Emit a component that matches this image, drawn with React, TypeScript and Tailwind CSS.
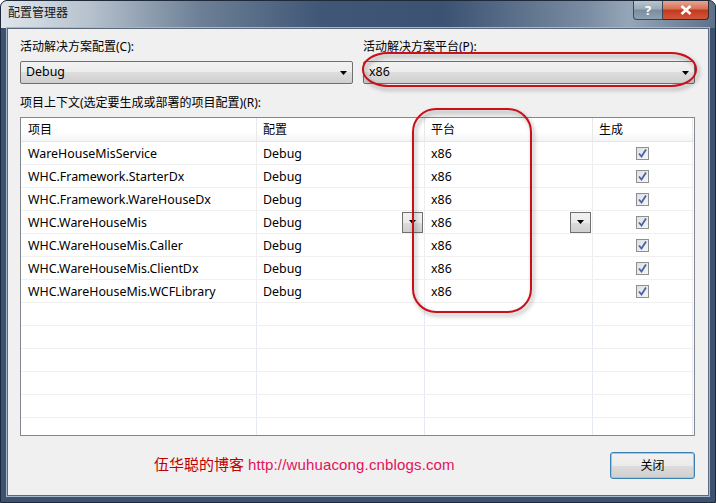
import React from 'react';

const ui = { fontFamily: '"Noto Sans", "Noto Sans CJK SC", sans-serif' };

const projects = [
  'WareHouseMisService',
  'WHC.Framework.StarterDx',
  'WHC.Framework.WareHouseDx',
  'WHC.WareHouseMis',
  'WHC.WareHouseMis.Caller',
  'WHC.WareHouseMis.ClientDx',
  'WHC.WareHouseMis.WCFLibrary',
];

function Arrow() {
  return (
    <svg width="7" height="4" viewBox="0 0 7 4">
      <path d="M0 0H7L3.5 4Z" fill="#000" />
    </svg>
  );
}

function Combo({ value, w }: { value: string; w: string }) {
  return (
    <div
      className={`${w} h-[23px] flex items-center justify-between pl-[5px] pr-[5px] rounded-[2px] border border-[#707070] bg-[linear-gradient(#f2f2f2_0%,#ebebeb_50%,#dddddd_50%,#cfcfcf_100%)] text-[12.4px] text-black`}
    >
      <span>{value}</span>
      <Arrow />
    </div>
  );
}

function CellDrop() {
  return (
    <div className="w-[21px] h-[21px] mr-[1px] flex items-center justify-center border border-[#707070] bg-[linear-gradient(#f2f2f2_0%,#ebebeb_50%,#dddddd_50%,#cfcfcf_100%)]">
      <Arrow />
    </div>
  );
}

function Check() {
  return (
    <div className="w-[13px] h-[13px] border border-[#8e8f8f] bg-[linear-gradient(135deg,#dcdfe6,#f6f6f6)] flex items-center justify-center">
      <svg width="9" height="9" viewBox="0 0 9 9">
        <path d="M1 4.5L3.5 7.5L8 0.5" fill="none" stroke="#4a62a4" strokeWidth="1.8" />
      </svg>
    </div>
  );
}

export default function App() {
  return (
    <div className="w-[716px] h-[503px] bg-white" style={ui}>
      <div className="relative w-[716px] h-[503px] rounded-t-[7px] bg-[#3d5171] border border-[#1e2a3a] overflow-hidden">
        {/* title bar */}
        <div className="h-[27px] flex items-start justify-between bg-[linear-gradient(90deg,#dfe5eb_0%,#b8c3ce_12%,#6c7f95_28%,#3f5676_45%,#3b5272_62%,#7a8ca2_82%,#95a6b8_88%,#5d7189_100%)]">
          <div className="pl-[7px] pt-[4px] text-[12px] leading-[16px] text-[#141414]">配置管理器</div>
          <div className="flex mr-[6px]">
            <div className="w-[30px] h-[19px] rounded-bl-[4px] border border-t-0 border-[#3a4a5e] bg-[linear-gradient(#b9c4cf_0%,#9aa9b8_45%,#7b8c9d_50%,#8fa0b0_100%)] flex items-center justify-center text-white text-[13px] font-bold leading-none">
              ?
            </div>
            <div className="w-[46px] h-[19px] rounded-br-[4px] border border-l-0 border-t-0 border-[#3a2a2a] bg-[linear-gradient(#e8a493_0%,#d47156_45%,#c2391c_50%,#d3563a_100%)] flex items-center justify-center">
              <svg width="12" height="10" viewBox="0 0 12 10">
                <path d="M1.5 1L10.5 9M10.5 1L1.5 9" stroke="#fff" strokeWidth="2.6" />
              </svg>
            </div>
          </div>
        </div>

        {/* client area */}
        <div className="ml-[6px] w-[702px] h-[468px] bg-[#f0f0f0] border border-[#5a697c] shadow-[0_0_0_1px_#a7b6c8] pl-[12px] pr-[12px] pt-[10px] text-[12px] text-black">
          <div className="flex gap-[10px]">
            <div>
              <div className="leading-[16px]">活动解决方案配置(C):</div>
              <div className="mt-[6px]">
                <Combo value="Debug" w="w-[333px]" />
              </div>
            </div>
            <div>
              <div className="leading-[16px]">活动解决方案平台(P):</div>
              <div className="mt-[6px]">
                <Combo value="x86" w="w-[332px]" />
              </div>
            </div>
          </div>

          <div className="mt-[11px] leading-[16px]">项目上下文(选定要生成或部署的项目配置)(R):</div>

          <div className="mt-[6px] w-[675px] h-[319px] border border-[#828790] bg-white overflow-hidden">
            <div className="flex h-[24px] border-b border-[#e5e5e5] bg-[linear-gradient(#ffffff_0%,#ffffff_60%,#f3f4f6_100%)]">
              <div className="w-[236px] pl-[7px] flex items-center border-r border-[#e8e8e8]">项目</div>
              <div className="w-[168px] pl-[6px] flex items-center border-r border-[#e8e8e8]">配置</div>
              <div className="w-[168px] pl-[6px] flex items-center border-r border-[#e8e8e8]">平台</div>
              <div className="w-[100px] pl-[6px] flex items-center border-r border-[#e8e8e8]">生成</div>
            </div>
            {projects.map((p, i) => (
              <div key={p} className="flex h-[23px] border-b border-[#f0f0f0] text-[12.4px]">
                <div className="w-[236px] pl-[7px] pt-[2px] flex items-center border-r border-[#eeeeee]">{p}</div>
                <div className="w-[168px] pl-[6px] flex items-center justify-between border-r border-[#eeeeee]">
                  <span className="pt-[2px]">Debug</span>
                  {i === 3 && <CellDrop />}
                </div>
                <div className="w-[168px] pl-[6px] flex items-center justify-between border-r border-[#eeeeee]">
                  <span className="pt-[2px]">x86</span>
                  {i === 3 && <CellDrop />}
                </div>
                <div className="w-[100px] flex items-center justify-center border-r border-[#eeeeee]">
                  <Check />
                </div>
              </div>
            ))}
            {Array.from({ length: 6 }).map((_, i) => (
              <div key={i} className="flex h-[23px] border-b border-[#f0f0f0]">
                <div className="w-[236px] border-r border-[#e4e9f4]" />
                <div className="w-[168px] border-r border-[#e4e9f4]" />
                <div className="w-[168px] border-r border-[#e4e9f4]" />
                <div className="w-[100px] border-r border-[#e4e9f4]" />
              </div>
            ))}
          </div>

          <div className="mt-[16px] flex items-center">
            <div className="ml-[134px] -mt-[3px] text-[15px] leading-[20px]">
              <span className="text-[#c00000]" style={{ fontFamily: '"Noto Sans CJK SC", sans-serif' }}>
                伍华聪的博客
              </span>{' '}
              <span className="text-[#e3125c] tracking-[0.15px]" style={{ fontFamily: '"Liberation Sans", sans-serif' }}>
                http://wuhuacong.cnblogs.com
              </span>
            </div>
            <div className="ml-auto mr-[1px] w-[85px] h-[27px] rounded-[3px] border border-[#3c7fb1] shadow-[inset_0_0_0_1px_#7fd4f6] bg-[linear-gradient(#f2f2f2_0%,#ebebeb_50%,#dddddd_50%,#cfcfcf_100%)] flex items-center justify-center">
              关闭
            </div>
          </div>
        </div>

        {/* red annotations */}
        <div className="absolute left-[361px] top-[51px] w-[335px] h-[35px] rounded-[26px/17px] border-2 border-[#c8101a] drop-shadow-[2px_3px_2px_rgba(0,0,0,0.35)]" />
        <div className="absolute left-[411px] top-[107px] w-[120px] h-[205px] rounded-[24px] border-2 border-[#c8101a] drop-shadow-[2px_3px_2px_rgba(0,0,0,0.35)]" />
      </div>
    </div>
  );
}
